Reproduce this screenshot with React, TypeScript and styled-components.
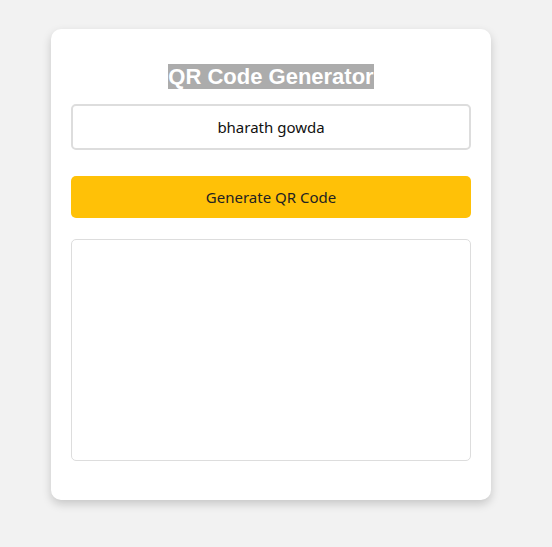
import React from "react";
import styled, { createGlobalStyle } from "styled-components";

const Global = createGlobalStyle`
  html, body { margin: 0; padding: 0; background: #f2f2f2; }
  body { font-family: "Noto Sans", "Open Sans", sans-serif; }
  * { box-sizing: border-box; }
`;

const Page = styled.div`
  display: flex;
  align-items: flex-start;
  justify-content: flex-start;
  padding: 29px 0 0 51px;
  min-height: 547px;
`;

const Card = styled.div`
  width: 440px;
  background: #fff;
  border-radius: 10px;
  box-shadow: 0 4px 10px rgba(0, 0, 0, 0.18);
  padding: 35px 20px 39px;
  display: flex;
  flex-direction: column;
  align-items: stretch;
`;

const Title = styled.h2`
  margin: 0 0 15px;
  text-align: center;
  font-family: "Liberation Sans", Arial, sans-serif;
  font-size: 22px;
  font-weight: 700;
  line-height: 25px;
`;

const Highlight = styled.span`
  background: #acacac;
  color: #fff;
`;

const Input = styled.input`
  width: 400px;
  height: 46px;
  border: 2px solid #dddddd;
  border-radius: 5px;
  text-align: center;
  font-family: "Noto Sans", sans-serif;
  font-size: 15px;
  color: #111;
  outline: none;
  margin: 0 0 26px;
`;

const Button = styled.button`
  width: 400px;
  height: 42px;
  border: none;
  border-radius: 5px;
  background: #ffc107;
  color: #222;
  font-family: "Noto Sans", sans-serif;
  font-size: 15px;
  cursor: pointer;
  margin: 0 0 21px;
`;

const QrBox = styled.div`
  width: 400px;
  height: 222px;
  border: 1px solid #dddddd;
  border-radius: 5px;
  background: #fff;
`;

export default function App() {
  return (
    <>
      <Global />
      <Page>
        <Card>
          <Title>
            <Highlight>QR Code Generator</Highlight>
          </Title>
          <Input defaultValue="bharath gowda" />
          <Button>Generate QR Code</Button>
          <QrBox />
        </Card>
      </Page>
    </>
  );
}
